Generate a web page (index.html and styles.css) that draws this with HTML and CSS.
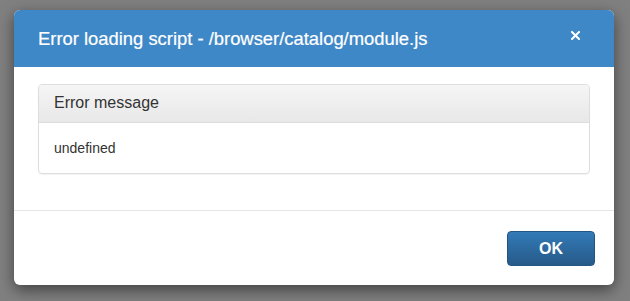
FILE: index.html
```html
<!DOCTYPE html>
<html>
<head>
<meta charset="utf-8">
<link rel="stylesheet" href="styles.css">
</head>
<body>
<div class="modal">
  <div class="modal-header">
    <h4 class="modal-title">Error loading script - /browser/catalog/module.js</h4>
    <span class="close"><svg width="9" height="9" viewBox="0 0 9 9"><path d="M1 1 L8 8 M8 1 L1 8" stroke="#fff" stroke-width="2" stroke-linecap="square"/></svg></span>
  </div>
  <div class="modal-body">
    <div class="panel">
      <div class="panel-heading">Error message</div>
      <div class="panel-body">undefined</div>
    </div>
  </div>
  <div class="modal-footer">
    <button class="btn">OK</button>
  </div>
</div>
</body>
</html>
```
FILE: styles.css
```css
html, body {
  margin: 0;
  padding: 0;
  background: #808080;
  font-family: "Liberation Sans", Arial, sans-serif;
  height: 301px;
  overflow: hidden;
}
.modal {
  margin: 10px 0 0 14px;
  width: 600px;
  background: #fff;
  border-radius: 6px;
  box-shadow: 0 5px 15px rgba(0,0,0,0.5);
  overflow: hidden;
}
.modal-header {
  background: #3f88c8;
  height: 57px;
  padding: 0 34px 0 24px;
  display: flex;
  align-items: center;
  justify-content: space-between;
  box-sizing: border-box;
}
.modal-title {
  margin: 0;
  color: #fff;
  font-size: 18.4px;
  font-weight: normal;
  line-height: 24px;
  -webkit-text-stroke: 0.2px #fff;
}
.close {
  display: flex;
  margin-top: -6px;
}
.modal-body {
  padding: 17px 24px 36px 24px;
}
.panel {
  border: 1px solid #ddd;
  border-radius: 4px;
  box-shadow: 0 1px 1px rgba(0,0,0,0.05);
}
.panel-heading {
  background: linear-gradient(#f5f5f5, #e8e8e8);
  border-bottom: 1px solid #ddd;
  border-radius: 3px 3px 0 0;
  padding: 0 15px;
  height: 37px;
  line-height: 36px;
  font-size: 16px;
  color: #333;
}
.panel-body {
  padding: 15px;
  font-size: 14px;
  line-height: 20px;
  color: #333;
  height: 20px;
}
.modal-footer {
  border-top: 1px solid #e5e5e5;
  padding: 20px 19px 19px 19px;
  display: flex;
  justify-content: flex-end;
}
.btn {
  width: 88px;
  height: 35px;
  border: 1px solid #245580;
  border-radius: 4px;
  background: linear-gradient(#337ab7, #265a88);
  color: #fff;
  font-family: "Liberation Sans", Arial, sans-serif;
  font-weight: bold;
  font-size: 16px;
  padding: 0;
}
```
